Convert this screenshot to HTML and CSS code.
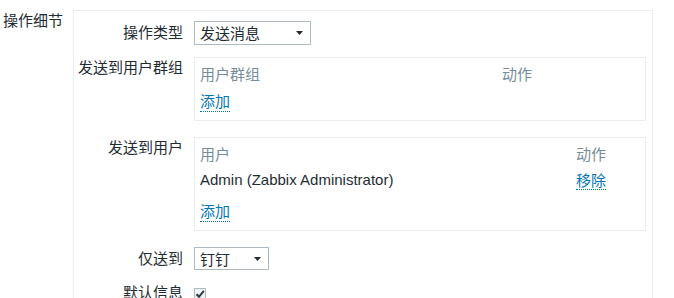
FILE: index.html
```html
<!DOCTYPE html>
<html lang="zh-CN">
<head>
    <meta charset="UTF-8">
    <title>操作细节</title>
    <link rel="stylesheet" href="styles.css">
</head>
<body>
    <div class="page">
        <div class="side-label">操作细节</div>
        <div class="panel">
            <div class="form-row">
                <label class="form-label">操作类型</label>
                <div class="select select-type">
                    <span>发送消息</span>
                    <svg class="arrow" width="7" height="4" viewBox="0 0 7 4"><polygon points="0,0 7,0 3.5,4" fill="#1f2c33"/></svg>
                </div>
            </div>
            <div class="form-row row-box">
                <label class="form-label">发送到用户群组</label>
                <div class="table-box groups">
                    <div class="t-row t-head">
                        <span>用户群组</span>
                        <span>动作</span>
                    </div>
                    <div class="t-row t-link">
                        <a class="link">添加</a>
                    </div>
                </div>
            </div>
            <div class="form-row row-box">
                <label class="form-label">发送到用户</label>
                <div class="table-box users">
                    <div class="t-row t-head">
                        <span>用户</span>
                        <span>动作</span>
                    </div>
                    <div class="t-row t-data">
                        <span>Admin (Zabbix Administrator)</span>
                        <span><a class="link">移除</a></span>
                    </div>
                    <div class="t-row t-link">
                        <a class="link">添加</a>
                    </div>
                </div>
            </div>
            <div class="form-row media-row">
                <label class="form-label">仅送到</label>
                <div class="select select-media">
                    <span>钉钉</span>
                    <svg class="arrow" width="7" height="4" viewBox="0 0 7 4"><polygon points="0,0 7,0 3.5,4" fill="#1f2c33"/></svg>
                </div>
            </div>
            <div class="form-row">
                <label class="form-label">默认信息</label>
                <span class="checkbox">
                    <svg width="10" height="10" viewBox="0 0 10 10"><path d="M1.5 5.2 L4 7.8 L8.8 1.8" stroke="#2b3a42" stroke-width="2" fill="none"/></svg>
                </span>
            </div>
        </div>
    </div>
</body>
</html>
```

FILE: styles.css
```css
body{
    margin: 0;
    padding: 0;
    background-color: white;
    color: #1f2c33;
    font-family: "Liberation Sans", "Noto Sans CJK SC", sans-serif;
    font-size: 15px;
}
.page{
    display: flex;
    padding-top: 10px;
}
.side-label{
    width: 73px;
    padding-left: 3px;
    box-sizing: border-box;
    line-height: 22px;
}
.panel{
    width: 580px;
    height: 300px;
    box-sizing: border-box;
    border: 1px solid #ebeef0;
    border-bottom: none;
    padding: 10px 6px 0 0;
    display: flex;
    flex-direction: column;
    gap: 12px;
}
.form-row{
    display: flex;
    align-items: flex-start;
    gap: 11px;
}
.row-box{
    margin-bottom: 4px;
}
.form-label{
    width: 109px;
    text-align: right;
    line-height: 22px;
}
.form-row:first-child .form-label{
    line-height: 24px;
}
.media-row .form-label{
    line-height: 23px;
}
.select{
    height: 24px;
    box-sizing: border-box;
    border: 1px solid #acbbc2;
    display: flex;
    align-items: center;
    justify-content: space-between;
    padding: 0 7px 0 5px;
}
.select span{
    line-height: 22px;
    padding-top: 2px;
}
.select-type{
    width: 117px;
}
.select-media{
    width: 75px;
    height: 23px;
}
.table-box{
    flex: 1;
    border: 1px solid #ebeef0;
    padding: 4px 5px 3px;
}
.users{
    padding-bottom: 2px;
}
.t-row{
    display: grid;
    align-items: center;
}
.groups .t-row{
    grid-template-columns: 302px 1fr;
}
.users .t-row{
    grid-template-columns: 376px 1fr;
}
.t-head{
    height: 23px;
    color: #768d99;
}
.t-data{
    height: 29px;
}
.t-link{
    height: 32px;
}
.users .t-link{
    height: 34px;
}
.link{
    color: #0275b8;
    border-bottom: 1px dotted #0275b8;
    justify-self: start;
    cursor: pointer;
}
.checkbox{
    width: 12px;
    height: 12px;
    box-sizing: border-box;
    border: 1px solid #acbbc2;
    background-color: #f0f2f3;
    display: flex;
    align-items: center;
    justify-content: center;
    margin-top: 6px;
}
```
